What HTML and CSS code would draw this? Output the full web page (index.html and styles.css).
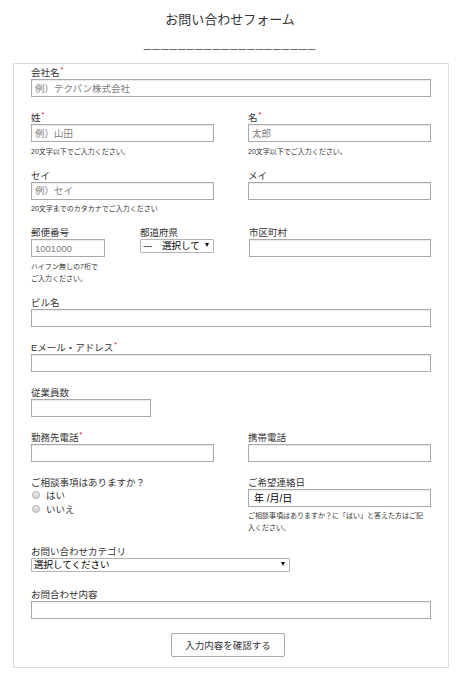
FILE: index.html
```html
<!DOCTYPE html>
<html lang="ja">
<head>
    <meta charset="UTF-8">
    <meta name="viewport" content="width=device-width, initial-scale=1.0">
    <title>お問い合わせフォーム</title>
    <link rel="stylesheet" href="styles.css">
</head>
<body>

<!-- ヘッダー -->
<h1 class="form-title">お問い合わせフォーム</h1>
<p class="form-rule">____________________</p>

<!-- フォーム本体 -->
<form class="contact-form">
    <div class="field">
        <label class="field-label" for="company">会社名<span class="req">*</span></label>
        <input class="text-input" type="text" id="company" placeholder="例）テクパン株式会社">
    </div>

    <div class="field-row">
        <div class="field">
            <label class="field-label" for="sei">姓<span class="req">*</span></label>
            <input class="text-input" type="text" id="sei" placeholder="例）山田">
            <p class="hint">20文字以下でご入力ください。</p>
        </div>
        <div class="field">
            <label class="field-label" for="mei">名<span class="req">*</span></label>
            <input class="text-input" type="text" id="mei" placeholder="太郎">
            <p class="hint">20文字以下でご入力ください。</p>
        </div>
    </div>

    <div class="field-row">
        <div class="field">
            <label class="field-label" for="sei-kana">セイ</label>
            <input class="text-input" type="text" id="sei-kana" placeholder="例）セイ">
            <p class="hint">20文字までのカタカナでご入力ください</p>
        </div>
        <div class="field">
            <label class="field-label" for="mei-kana">メイ</label>
            <input class="text-input" type="text" id="mei-kana">
        </div>
    </div>

    <div class="field-row address-row">
        <div class="field">
            <label class="field-label" for="zip">郵便番号</label>
            <input class="text-input" type="text" id="zip" placeholder="1001000">
            <p class="hint">ハイフン無しの7桁で<br>ご入力ください。</p>
        </div>
        <div class="field">
            <label class="field-label" for="pref">都道府県</label>
            <span class="select-wrap">
                <select class="select-input" id="pref">
                    <option>---　選択してください　---</option>
                </select>
            </span>
        </div>
        <div class="field">
            <label class="field-label" for="city">市区町村</label>
            <input class="text-input" type="text" id="city">
        </div>
    </div>

    <div class="field">
        <label class="field-label" for="building">ビル名</label>
        <input class="text-input" type="text" id="building">
    </div>

    <div class="field">
        <label class="field-label" for="email">Eメール・アドレス<span class="req">*</span></label>
        <input class="text-input" type="text" id="email">
    </div>

    <div class="field">
        <label class="field-label" for="staff">従業員数</label>
        <input class="text-input staff-input" type="text" id="staff">
    </div>

    <div class="field-row">
        <div class="field">
            <label class="field-label" for="tel">勤務先電話<span class="req">*</span></label>
            <input class="text-input" type="text" id="tel">
        </div>
        <div class="field">
            <label class="field-label" for="mobile">携帯電話</label>
            <input class="text-input" type="text" id="mobile">
        </div>
    </div>

    <div class="field-row">
        <div class="field">
            <span class="field-label">ご相談事項はありますか？</span>
            <div class="radio-list">
                <label class="radio-item"><input class="radio" type="radio" name="consult">はい</label>
                <label class="radio-item"><input class="radio" type="radio" name="consult">いいえ</label>
            </div>
        </div>
        <div class="field">
            <label class="field-label" for="contact-date">ご希望連絡日</label>
            <input class="text-input date-input" type="text" id="contact-date" value="年 /月/日">
            <p class="hint">ご相談事項はありますか？に「はい」と答えた方はご記<br>入ください。</p>
        </div>
    </div>

    <div class="field field-select">
        <label class="field-label" for="category">お問い合わせカテゴリ</label>
        <span class="select-wrap category-wrap">
            <select class="select-input" id="category">
                <option>選択してください</option>
            </select>
        </span>
    </div>

    <div class="field">
        <label class="field-label" for="body">お問合わせ内容</label>
        <input class="text-input" type="text" id="body">
    </div>

    <div class="actions">
        <button class="confirm-btn" type="button">入力内容を確認する</button>
    </div>
</form>

</body>
</html>
```

FILE: styles.css
```css
body {
    margin: 0;
    padding: 0;
    background-color: #fff;
    color: #333;
    font-family: "Liberation Sans", "Noto Sans CJK JP", sans-serif;
}

.form-title {
    margin: 0;
    padding-top: 10px;
    font-size: 13px;
    font-weight: normal;
    line-height: 20px;
    text-align: center;
}

.form-rule {
    margin: 5px 0 12px;
    font-size: 13px;
    line-height: 16px;
    letter-spacing: 1.4px;
    text-align: center;
    color: #555;
}

.contact-form {
    box-sizing: border-box;
    width: 436px;
    margin-left: 13px;
    padding: 2px 17px 10px;
    border: 1px solid #ddd; /* 薄いグレーの枠 */
}

.field {
    margin-bottom: 14px;
}

.field-select {
    margin-bottom: 16px;
}

.field-label {
    display: block;
    font-size: 9.5px;
    line-height: 13px;
    color: #333;
}

.req {
    color: #e60012;
    font-size: 7px;
    vertical-align: top;
    line-height: 8px;
    margin-left: 1px;
}

.field-row {
    display: grid;
    grid-template-columns: 1fr 1fr;
    column-gap: 34px;
}

.address-row {
    grid-template-columns: 74px 74px 1fr;
    column-gap: 35px;
}

.text-input {
    display: block;
    box-sizing: border-box;
    width: 100%;
    height: 18px;
    margin: 0;
    padding: 0 3px;
    border: 1px solid #a9a9a9;
    border-radius: 0;
    box-shadow: inset 0 1px 1px rgba(0, 0, 0, 0.08);
    font-family: inherit;
    font-size: 9.5px;
    color: #000;
}

.text-input::placeholder {
    color: #7d7d7d;
}

.staff-input {
    width: 120px;
}

.date-input {
    padding-left: 5px;
    font-size: 10px;
}

.hint {
    margin: 3.5px 0 -3px;
    font-size: 7px;
    line-height: 12px;
    color: #333;
}

.select-wrap {
    position: relative;
    display: block;
    width: 74px;
}

/* 矢印 */
.select-wrap::after {
    content: "";
    position: absolute;
    top: 4px;
    right: 5px;
    border-left: 2.5px solid transparent;
    border-right: 2.5px solid transparent;
    border-top: 4px solid #111;
    pointer-events: none;
}

.category-wrap {
    width: 259px;
}

.select-input {
    display: block;
    box-sizing: border-box;
    width: 100%;
    height: 14px;
    margin: 0;
    padding: 0 12px 0 2px;
    border: 1px solid #b3b3b3;
    border-radius: 1px;
    background-color: #fff;
    -webkit-appearance: none;
    appearance: none;
    font-family: inherit;
    font-size: 9.5px;
    line-height: 12px;
    color: #000;
}

.radio-list {
    margin-top: -1px;
}

.radio-item {
    display: flex;
    align-items: center;
    height: 14px;
    font-size: 9.5px;
    color: #333;
}

.radio {
    -webkit-appearance: none;
    appearance: none;
    box-sizing: border-box;
    width: 8px;
    height: 8px;
    margin: 0 6px 0 1px;
    border: 1px solid #b0b0b0;
    border-radius: 50%;
    background: linear-gradient(#e6e6e6, #d4d4d4);
}

.actions {
    text-align: center;
    margin-left: -6px;
}

.confirm-btn {
    width: 114px;
    height: 24px;
    padding: 0;
    border: 1px solid #a9a9a9;
    border-radius: 2px;
    background-color: #fdfdfd;
    font-family: inherit;
    font-size: 9.5px;
    color: #333;
    cursor: pointer;
}

.confirm-btn:hover {
    background-color: #f0f0f0;
}
```
